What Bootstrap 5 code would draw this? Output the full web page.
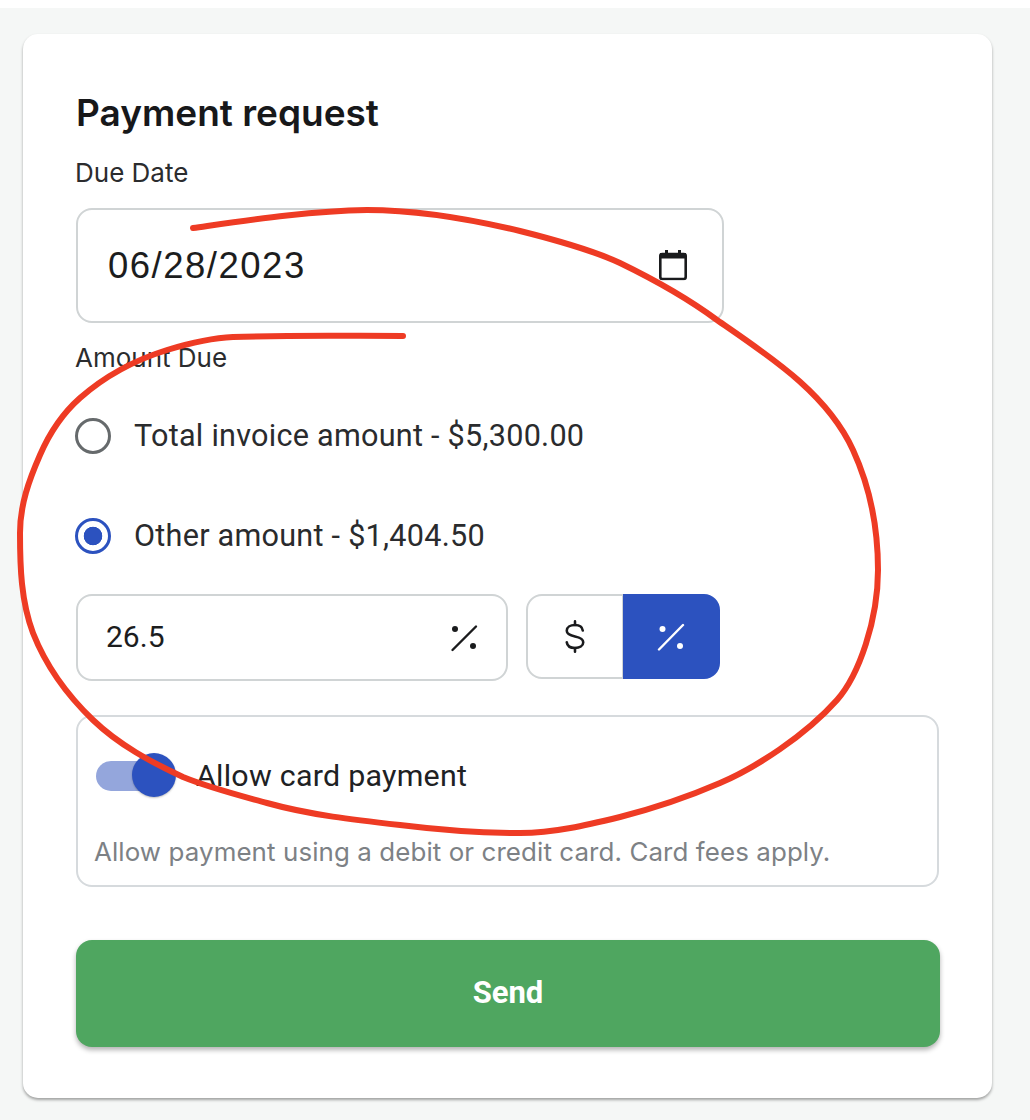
<!DOCTYPE html>
<html lang="en">
<head>
<meta charset="utf-8">
<title>Payment request</title>
<link href="https://cdn.jsdelivr.net/npm/bootstrap@5.3.0/dist/css/bootstrap.min.css" rel="stylesheet">
<style>
  body { background:#fff; font-family:Roboto,"Liberation Sans",sans-serif; color:#1c1d1e; position:relative; }
  .shell { margin-top:8px; min-height:1112px; background:#f5f7f6; padding:26px 38px 0 23px; }
  .pay-card { width:969px; height:1064px; border:0; border-radius:15px; box-shadow:0 2px 3px rgba(0,0,0,.35); }
  .pay-card .card-body { padding:53px 53px 0; }
  .pay-title { font-family:Inter,sans-serif; font-weight:600; font-size:37px; line-height:52px; margin:0 0 18px; color:#17181a; }
  .pay-label { font-family:Inter,sans-serif; font-size:26px; line-height:32px; margin:0 0 19px -1px; color:#2b2c2e; display:block; }
  .field-wrap { position:relative; }
  .date-field { width:648px; height:115px; }
  .field-wrap .form-control { height:100%; border:2px solid #d0d4d5; border-radius:16px; background:#fff; color:#1c1d1e; box-shadow:none; }
  .date-field .form-control { font-family:"Liberation Sans",sans-serif; font-size:36.500px; letter-spacing:1.500px; padding:0 0 0 30px; }
  .field-icon { position:absolute; top:50%; transform:translateY(-50%); }
  .date-field .field-icon { right:36px; margin-top:-1px; }
  .amount-label { margin:19px 0 26px -1px; }
  .radio-row { display:flex; align-items:center; margin:0 0 0 -1px; padding:0; height:100px; gap:23px; }
  .radio-row .form-check-input { float:none; flex:none; width:36px; height:36px; margin:0; border:3px solid #666a6c; background-color:#fff; box-shadow:none; }
  .radio-row .form-check-input:checked { border-color:#2c52bf; background-color:#fff; background-image:radial-gradient(circle,#2c52bf 0 9px,#fff 9.6px); }
  .radio-row .form-check-label { font-size:30.600px; letter-spacing:.25px; color:#2a2b2d; }
  .radio-list { margin-top:-14px; }
  .amount-row { display:flex; gap:18px; margin-top:8px; }
  .percent-field { width:432px; height:87px; }
  .percent-field .form-control { font-size:30px; padding:0 0 2px 28px; }
  .percent-field .field-icon { right:30px; }
  .unit-group { width:194px; height:85px; }
  .unit-group .btn { flex:1 1 50%; display:flex; align-items:center; justify-content:center; padding:0; border:2px solid #d0d4d5; border-radius:16px; background:#fff; }
  .unit-group .btn.unit-on { background:#2c52bf; border-color:#2c52bf; }
  .allow-box { margin-top:34px; height:172px; border:2px solid #d6dadd; border-radius:16px; padding:0 0 0 16px; }
  .allow-top { display:flex; align-items:center; height:117px; padding-left:2px; }
  .switch-track { position:relative; flex:none; width:74px; height:30px; border-radius:15px; background:#94a6dc; margin-right:26px; }
  .switch-thumb { position:absolute; right:-6px; top:-8px; width:44px; height:44px; border-radius:50%; background:#2c52bf; box-shadow:0 1px 2px rgba(0,0,0,.25); }
  .allow-title { font-size:30.400px; letter-spacing:.25px; color:#202123; }
  .allow-note { font-family:Inter,sans-serif; font-size:25.900px; letter-spacing:.1px; line-height:32px; margin:2px 0 0; color:#7d8185; white-space:nowrap; }
  .send-btn { display:block; width:864px; height:107px; margin-top:53px; border:0; border-radius:16px; background:#4fa660; color:#fff; font-size:31px; font-weight:700; box-shadow:0 3px 5px rgba(0,0,0,.3); }
  .send-btn:hover { background:#4fa660; color:#fff; }
  .scribble { position:absolute; left:0; top:0; pointer-events:none; }
</style>
</head>
<body>
<div class="shell">
  <div class="card pay-card">
    <div class="card-body">
      <h1 class="pay-title">Payment request</h1>
      <label class="pay-label" for="due">Due Date</label>
      <div class="field-wrap date-field">
        <input id="due" type="text" class="form-control" value="06/28/2023">
        <svg class="field-icon" width="30" height="31" viewBox="0 0 30 31" fill="none" aria-hidden="true">
          <rect x="2.300" y="4.500" width="25.400" height="25" rx="2" stroke="#1a1b1d" stroke-width="2.600"/>
          <rect x="2" y="3.500" width="26" height="5.500" fill="#1a1b1d"/>
          <rect x="7" y="0.500" width="3" height="4" fill="#1a1b1d"/>
          <rect x="20" y="0.500" width="3" height="4" fill="#1a1b1d"/>
        </svg>
      </div>
      <label class="pay-label amount-label">Amount Due</label>
      <div class="radio-list">
        <div class="form-check radio-row">
          <input class="form-check-input" type="radio" name="amt" id="amt1">
          <label class="form-check-label" for="amt1">Total invoice amount - $5,300.00</label>
        </div>
        <div class="form-check radio-row">
          <input class="form-check-input" type="radio" name="amt" id="amt2" checked>
          <label class="form-check-label" for="amt2">Other amount - $1,404.50</label>
        </div>
      </div>
      <div class="amount-row">
        <div class="field-wrap percent-field">
          <input type="text" class="form-control" value="26.5" aria-label="Amount">
          <svg class="field-icon" width="28" height="28" viewBox="0 0 28 28" aria-hidden="true">
            <path d="M2.500 26 26 2.500" stroke="#1a1b1d" stroke-width="2.400" stroke-linecap="round"/>
            <circle cx="5" cy="5" r="3" fill="#1a1b1d"/><circle cx="23" cy="22" r="3" fill="#1a1b1d"/>
          </svg>
        </div>
        <div class="btn-group unit-group" role="group" aria-label="Unit">
          <button type="button" class="btn" aria-label="Dollar">
            <svg width="22" height="35" viewBox="0 0 24 36" fill="none" stroke="#1a1b1d" stroke-width="2.800" stroke-linecap="round" aria-hidden="true">
              <path d="M20.500 11.500C20 7.500 16.800 5.500 12 5.500 6.800 5.500 3 8 3 11.800 3 15.800 7 17 12 18c5 1 9 2.500 9 6.300 0 4-4 6.200-9 6.200-5 0-8.500-2.200-9-6.200"/>
              <path d="M12 1.500v4M12 30.500v4"/>
            </svg>
          </button>
          <button type="button" class="btn unit-on" aria-label="Percent">
            <svg width="28" height="28" viewBox="0 0 28 28" aria-hidden="true">
              <path d="M2 26.500 26 2" stroke="#fff" stroke-width="2.400" stroke-linecap="round"/>
              <circle cx="5.500" cy="6" r="3" fill="#fff"/><circle cx="23" cy="23" r="3" fill="#fff"/>
            </svg>
          </button>
        </div>
      </div>
      <div class="allow-box">
        <div class="allow-top">
          <span class="switch-track"><span class="switch-thumb"></span></span>
          <span class="allow-title">Allow card payment</span>
        </div>
        <p class="allow-note">Allow payment using a debit or credit card. Card fees apply.</p>
      </div>
      <button type="button" class="btn send-btn">Send</button>
    </div>
  </div>
</div>
<svg class="scribble" width="1030" height="1120" viewBox="0 0 1030 1120" fill="none" aria-hidden="true">
  <path d="M193 228C250 220 309 211 367 210C418 210 470 219 520 231C560 241 592 250 620 263C655 280 690 300 717 320C769 356 827 393 853 450C870 487 878 529 878 570C878 620 859 675 837 700C805 736 755 768 720 783C690 796 655 808 620 817C587 825 554 833 520 833C480 833 440 830 400 825C355 820 310 815 267 803C238 795 210 788 183 777C151 762 119 745 93 720C68 696 46 666 33 633C21 601 20 567 20 533C20 505 29 480 40 455C50 432 63 413 80 398C105 376 135 360 167 350C190 343 210 338 233 337C290 335 346 336 403 336" stroke="#ee3b24" stroke-width="6" stroke-linecap="round" stroke-linejoin="round"/>
</svg>
<script src="https://cdn.jsdelivr.net/npm/bootstrap@5.3.0/dist/js/bootstrap.bundle.min.js"></script>
</body>
</html>
